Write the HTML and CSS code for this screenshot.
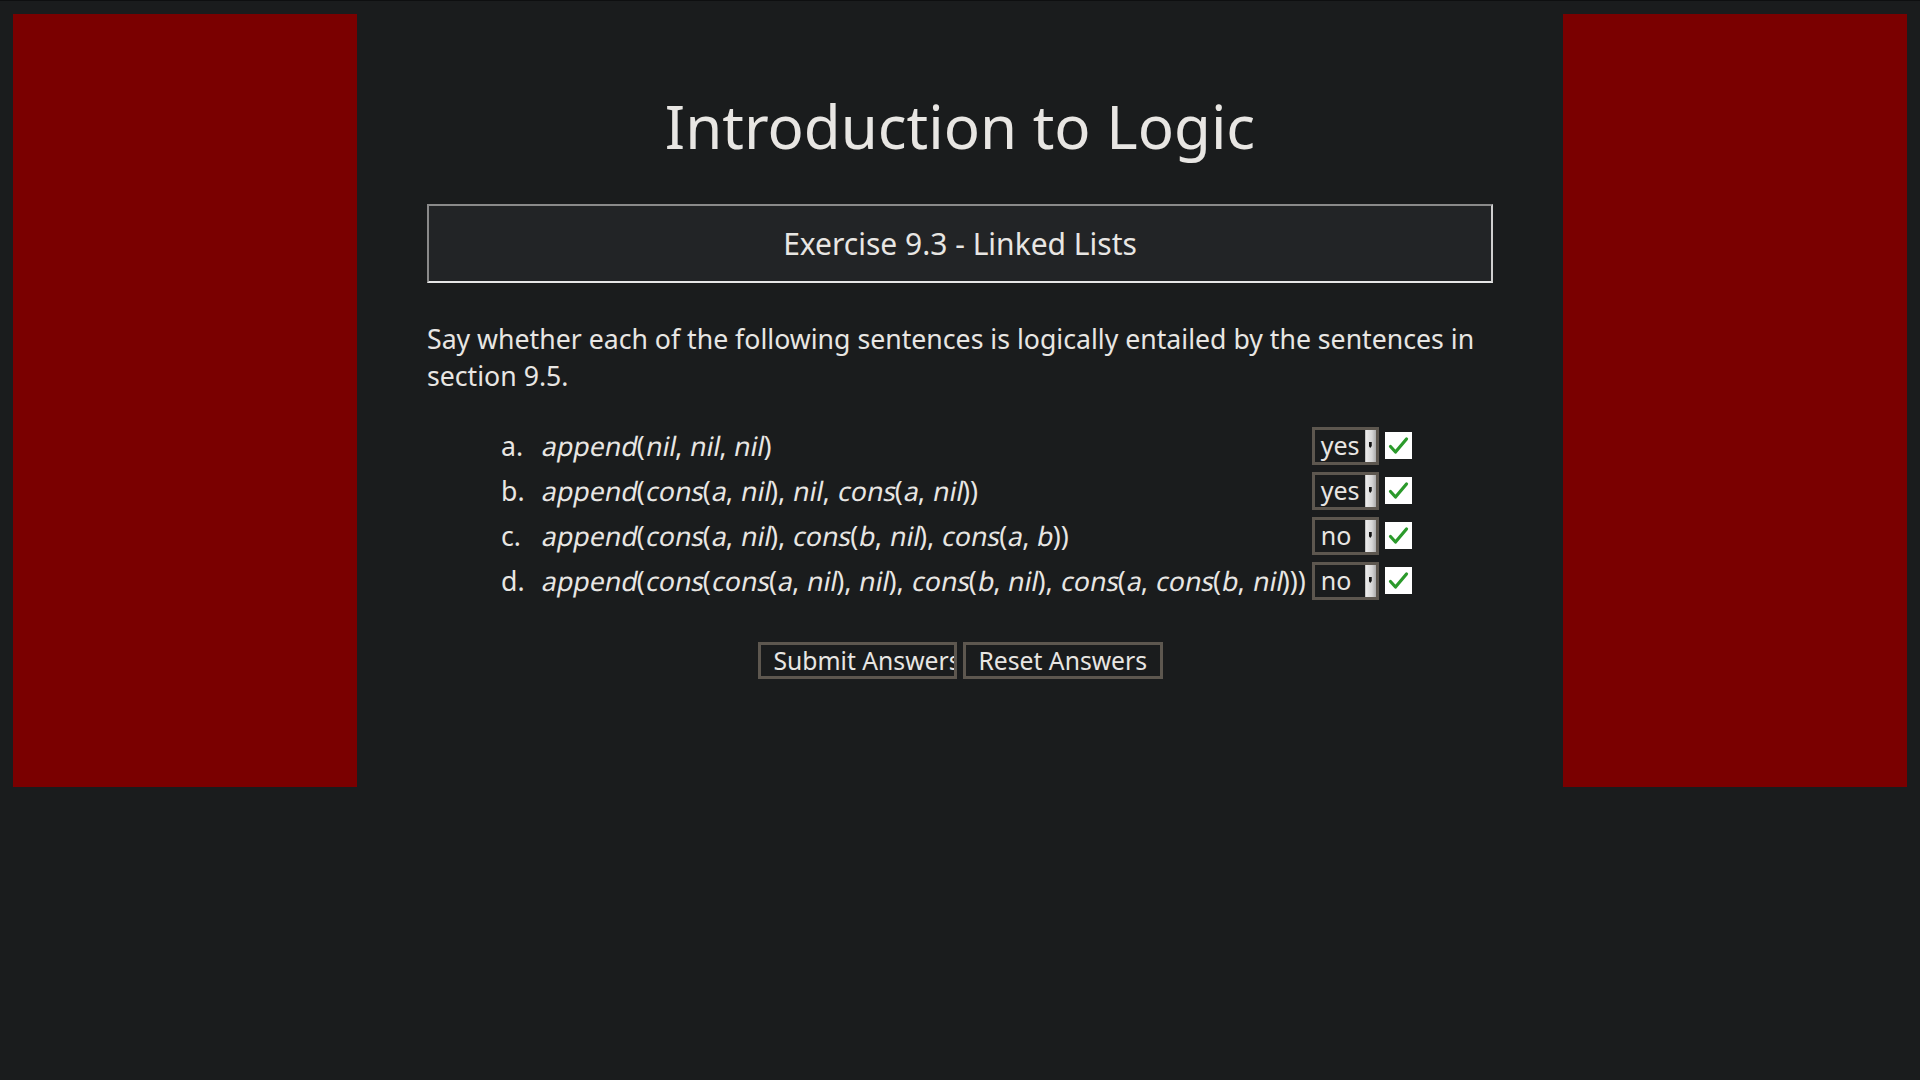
FILE: index.html
```html
<!DOCTYPE html>
<html lang="en">
<head>
<meta charset="utf-8">
<title>Introduction to Logic - Exercise 9.3</title>
<link rel="stylesheet" href="styles.css">
</head>
<body>
<div class="page">
  <aside class="side"></aside>
  <main class="main">
    <h1 class="title">Introduction to Logic</h1>
    <div class="exercise">Exercise 9.3 - Linked Lists</div>
    <p class="intro">Say whether each of the following sentences is logically entailed by the sentences in section 9.5.</p>
    <table class="questions">
      <tr>
        <td class="num">a.</td>
        <td class="expr"><i>append</i>(<i>nil</i>, <i>nil</i>, <i>nil</i>)</td>
        <td class="ans"><span class="sel"><span class="sel-val">yes</span><span class="sel-btn"></span></span></td>
        <td class="mark"><svg class="check" viewBox="0 0 27 27" width="27" height="27"><rect width="27" height="27" fill="#fff"/><path d="M5.5 14.5 L10.5 20 L21.5 7" fill="none" stroke="#2b9a2b" stroke-width="3.2" stroke-linecap="round" stroke-linejoin="round"/></svg></td>
      </tr>
      <tr>
        <td class="num">b.</td>
        <td class="expr"><i>append</i>(<i>cons</i>(<i>a</i>, <i>nil</i>), <i>nil</i>, <i>cons</i>(<i>a</i>, <i>nil</i>))</td>
        <td class="ans"><span class="sel"><span class="sel-val">yes</span><span class="sel-btn"></span></span></td>
        <td class="mark"><svg class="check" viewBox="0 0 27 27" width="27" height="27"><rect width="27" height="27" fill="#fff"/><path d="M5.5 14.5 L10.5 20 L21.5 7" fill="none" stroke="#2b9a2b" stroke-width="3.2" stroke-linecap="round" stroke-linejoin="round"/></svg></td>
      </tr>
      <tr>
        <td class="num">c.</td>
        <td class="expr"><i>append</i>(<i>cons</i>(<i>a</i>, <i>nil</i>), <i>cons</i>(<i>b</i>, <i>nil</i>), <i>cons</i>(<i>a</i>, <i>b</i>))</td>
        <td class="ans"><span class="sel"><span class="sel-val">no</span><span class="sel-btn"></span></span></td>
        <td class="mark"><svg class="check" viewBox="0 0 27 27" width="27" height="27"><rect width="27" height="27" fill="#fff"/><path d="M5.5 14.5 L10.5 20 L21.5 7" fill="none" stroke="#2b9a2b" stroke-width="3.2" stroke-linecap="round" stroke-linejoin="round"/></svg></td>
      </tr>
      <tr>
        <td class="num">d.</td>
        <td class="expr"><i>append</i>(<i>cons</i>(<i>cons</i>(<i>a</i>, <i>nil</i>), <i>nil</i>), <i>cons</i>(<i>b</i>, <i>nil</i>), <i>cons</i>(<i>a</i>, <i>cons</i>(<i>b</i>, <i>nil</i>)))</td>
        <td class="ans"><span class="sel"><span class="sel-val">no</span><span class="sel-btn"></span></span></td>
        <td class="mark"><svg class="check" viewBox="0 0 27 27" width="27" height="27"><rect width="27" height="27" fill="#fff"/><path d="M5.5 14.5 L10.5 20 L21.5 7" fill="none" stroke="#2b9a2b" stroke-width="3.2" stroke-linecap="round" stroke-linejoin="round"/></svg></td>
      </tr>
    </table>
    <div class="actions">
      <button class="btn btn-submit" type="button">Submit Answers</button>
      <button class="btn btn-reset" type="button">Reset Answers</button>
    </div>
  </main>
  <aside class="side"></aside>
</div>
</body>
</html>
```
FILE: styles.css
```css
html, body {
  margin: 0;
  padding: 0;
  background: #1a1c1d;
}
body {
  border-top: 1px solid #0e0f10;
  font-family: "Noto Sans", "Open Sans", sans-serif;
  color: #e8e6e3;
  font-size: 26.67px;
  min-height: 1079px;
}
.page {
  display: flex;
  align-items: stretch;
  padding: 13px 13px 0 13px;
}
.side {
  flex: 0 0 344px;
  height: 773px;
  background: #7a0000;
}
.main {
  flex: 1 1 auto;
  padding: 0 70px;
}
.title {
  margin: 76px 0 0;
  font-size: 60px;
  font-weight: 400;
  line-height: 72px;
  text-align: center;
}
.exercise {
  margin-top: 42px;
  background: #222426;
  border: 2px solid;
  border-color: #8a8a8a #cfcfcf #e6e6e6 #8a8a8a;
  padding: 16px 0;
  font-size: 30px;
  line-height: 43px;
  text-align: center;
}
.intro {
  margin: 37px 0 0;
  line-height: 37px;
}
.questions {
  margin: 29px 0 0 66px;
  border-collapse: collapse;
}
.questions td {
  padding: 0;
  height: 45px;
  line-height: 34px;
  vertical-align: middle;
  white-space: nowrap;
}
.questions .num {
  width: 40px;
  padding-left: 8px;
}
.questions .expr {
  padding-right: 6px;
}
.questions i {
  display: inline-block;
  font-style: normal;
  line-height: 34px;
  transform: skewX(-11deg);
  transform-origin: 0 75%;
}
.sel {
  display: inline-flex;
  align-items: stretch;
  box-sizing: border-box;
  width: 67px;
  height: 38px;
  border: 3px solid #5d574f;
  background: #1a1c1d;
  vertical-align: middle;
  font-size: 25px;
}
.sel-val {
  flex: 1;
  padding-left: 6px;
  line-height: 31px;
}
.sel-btn {
  position: relative;
  flex: 0 0 10px;
  background: linear-gradient(to right, #ececec, #d6d6d6 60%, #ababab);
  border-left: 1px solid #c4c4c4;
}
.sel-btn::after {
  content: "";
  position: absolute;
  left: 3px;
  top: 12px;
  width: 3px;
  height: 6px;
  background: #111;
  clip-path: polygon(0 0, 100% 0, 100% 70%, 50% 100%, 0 70%);
}
.questions .mark {
  padding-left: 6px;
}
.check {
  display: block;
}
.actions {
  margin-top: 39px;
  display: flex;
  justify-content: center;
  gap: 6px;
}
.btn {
  box-sizing: border-box;
  height: 37px;
  padding: 0 13px;
  border: 3px solid #5d574f;
  background: #1a1c1d;
  color: #e8e6e3;
  font-family: "Noto Sans", "Open Sans", sans-serif;
  font-size: 24.7px;
  line-height: 29px;
  white-space: nowrap;
  overflow: hidden;
  text-align: left;
}
.btn-submit {
  width: 199px;
}
.btn-reset {
  width: 200px;
  text-align: center;
}
```
